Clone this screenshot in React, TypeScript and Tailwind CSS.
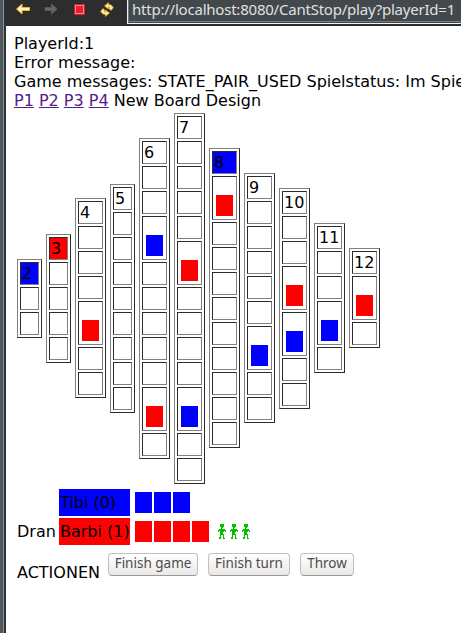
import React from "react";

type Color = "red" | "blue";
type Column = {
  label: number;
  cells: number;
  narrow?: boolean;
  won?: Color;
  pieces?: Record<number, Color>;
};

const columns: Column[] = [
  { label: 2, cells: 3, narrow: true, won: "blue" },
  { label: 3, cells: 5, narrow: true, won: "red" },
  { label: 4, cells: 7, pieces: { 4: "red" } },
  { label: 5, cells: 9, narrow: true },
  { label: 6, cells: 11, pieces: { 3: "blue", 9: "red" } },
  { label: 7, cells: 13, pieces: { 5: "red", 10: "blue" } },
  { label: 8, cells: 11, won: "blue", pieces: { 1: "red" } },
  { label: 9, cells: 9, pieces: { 6: "blue" } },
  { label: 10, cells: 7, pieces: { 3: "red", 4: "blue" } },
  { label: 11, cells: 5, pieces: { 3: "blue" } },
  { label: 12, cells: 3, pieces: { 1: "red" } },
];

const fill: Record<Color, string> = { red: "bg-[#ff0000]", blue: "bg-[#0000ff]" };

function Piece({ color }: { color: Color }) {
  return <div className={`h-[21px] w-[17px] ${fill[color]}`} />;
}

function BoardColumn({ column }: { column: Column }) {
  const pieces = column.pieces ?? {};
  const single = Object.keys(pieces).length === 1;
  return (
    <div
      className={`flex flex-col gap-[2px] border border-t-[#808080] border-r-[#2b2b2b] border-b-[#2b2b2b] border-l-[#808080] p-[2px] ${
        column.narrow ? "w-[25px]" : "w-[31px]"
      } ${single ? "mb-px" : ""}`}
    >
      {Array.from({ length: column.cells }, (_, i) => (
        <div
          key={i}
          className={`flex border border-t-[#2b2b2b] border-r-[#808080] border-b-[#808080] border-l-[#2b2b2b] ${
            pieces[i] ? "h-[44px] items-end pb-[3px] pl-[3px]" : "h-[23px] pl-px pt-px"
          } ${i === 0 && column.won ? fill[column.won] : ""}`}
        >
          {i === 0 && column.label}
          {pieces[i] && <Piece color={pieces[i]} />}
        </div>
      ))}
    </div>
  );
}

const runner = [
  "..####..",
  "..####..",
  "..####..",
  "...##...",
  "...#....",
  ".######.",
  "########",
  "#.####.#",
  "..###...",
  "..###...",
  "..####..",
  "..#..#..",
  "..#..#..",
  ".##..#..",
  ".##..##.",
];

function Runner() {
  return (
    <svg width="8" height="15" viewBox="0 0 8 15" shapeRendering="crispEdges" fill="#00c000">
      {runner.flatMap((row, y) =>
        row.split("").map((c, x) => (c === "#" ? <rect key={`${x}-${y}`} x={x} y={y} width="1" height="1" /> : null)),
      )}
    </svg>
  );
}

function Toolbar() {
  return (
    <div className="flex h-[26px] items-start overflow-hidden bg-[#2d2d2d]">
      <svg width="121" height="26" viewBox="6 0 121 26" className="shrink-0">
        <path d="M16.500 9 L22 4 V7.500 H29.500 V10.500 H22 V14 Z" fill="#fff3c0" stroke="#eeb52e" strokeLinejoin="round" />
        <path d="M57 9 L51.500 4 V7.500 H45 V10.500 H51.500 V14 Z" fill="#666" stroke="#595959" strokeLinejoin="round" />
        <rect x="74.500" y="4.500" width="10" height="10" fill="#e8202f" stroke="#d8202c" />
        <rect x="75.500" y="5.500" width="8" height="8" fill="none" stroke="#f58088" />
        <g fill="#ffe991" stroke="#e0a322" strokeWidth=".7" strokeLinejoin="round">
          <path id="turn" d="M104.500 6 L108.500 2.500 V4.500 C111 4.500 112.500 5.500 112.500 7 L113.500 7.500 L111 10.500 L108.500 8 L109.500 7.500 C109.500 7 109 7 108.500 7 V9 Z" />
          <path d="M104.500 6 L108.500 2.500 V4.500 C111 4.500 112.500 5.500 112.500 7 L113.500 7.500 L111 10.500 L108.500 8 L109.500 7.500 C109.500 7 109 7 108.500 7 V9 Z" transform="rotate(180 107 9.500)" />
        </g>
      </svg>
      <div className="h-[24px] flex-1 border-b border-l border-[#f2f2f2] bg-[#42484b]">
        <div className="h-[22px] border-b border-l border-[#777b7d] pl-[3px] font-['Noto_Sans','Open_Sans',sans-serif] text-[15px] leading-[19px] tracking-[-0.22px] whitespace-nowrap text-[#e0e0e0]">
          http://localhost:8080/CantStop/play?playerId=1
        </div>
      </div>
    </div>
  );
}

function Button({ className, children }: { className: string; children: React.ReactNode }) {
  return (
    <button
      className={`h-[23px] rounded-[4px] border border-[#c2c0be] border-b-[#9b9997] bg-linear-to-b from-white to-[#eae8e6] pb-[2px] font-['Noto_Sans','Open_Sans',sans-serif] text-[13.500px] leading-[19px] whitespace-nowrap text-[#4c4c4c] ${className}`}
    >
      {children}
    </button>
  );
}

export default function App() {
  return (
    <div className="flex h-[633px] w-[461px] overflow-hidden bg-white font-['DejaVu_Sans',sans-serif] text-[16px] leading-[19px] text-black">
      <div className="w-[6px] shrink-0 border-r-2 border-[#303235] bg-[#4f585b]">
        <div className="ml-auto h-full w-px bg-[#8b9294]" />
      </div>
      <div className="min-w-0 flex-1">
        <Toolbar />
        <div className="px-2 pt-2 whitespace-nowrap">
          <div>PlayerId:1</div>
          <div>Error message:</div>
          <div>Game messages: STATE_PAIR_USED Spielstatus: Im Spiel</div>
          <div>
            {["P1", "P2", "P3", "P4"].map((p) => (
              <React.Fragment key={p}>
                <a className="text-[#551a8b] underline">{p}</a>{" "}
              </React.Fragment>
            ))}
            New Board Design
          </div>
          <div className="mt-[3px] flex items-center gap-1 pl-[3px]">
            {columns.map((c) => (
              <BoardColumn key={c.label} column={c} />
            ))}
          </div>
          <div className="mt-[5px] grid grid-cols-[40px_71px_auto] gap-x-[2px] gap-y-[2px] pl-[3px] leading-[27px]">
            <div />
            <div className="h-[27px] bg-[#0000ff] pl-px">Tibi (0)</div>
            <div className="flex items-center gap-[2px] pl-[3px]">
              <Piece color="blue" />
              <Piece color="blue" />
              <Piece color="blue" />
            </div>
            <div>Dran</div>
            <div className="h-[27px] bg-[#ff0000] pl-px">Barbi (1)</div>
            <div className="flex items-center gap-[2px] pl-[3px]">
              <Piece color="red" />
              <Piece color="red" />
              <Piece color="red" />
              <Piece color="red" />
              <div className="ml-[7px] flex gap-1">
                <Runner />
                <Runner />
                <Runner />
              </div>
            </div>
          </div>
          <div className="mt-2 flex pl-[3px]">
            <div className="w-[91px] pt-[10px]">ACTIONEN</div>
            <div className="flex gap-[10px]">
              <Button className="w-[90px]">Finish game</Button>
              <Button className="w-[82px]">Finish turn</Button>
              <Button className="w-[54px]">Throw</Button>
            </div>
          </div>
        </div>
      </div>
    </div>
  );
}
